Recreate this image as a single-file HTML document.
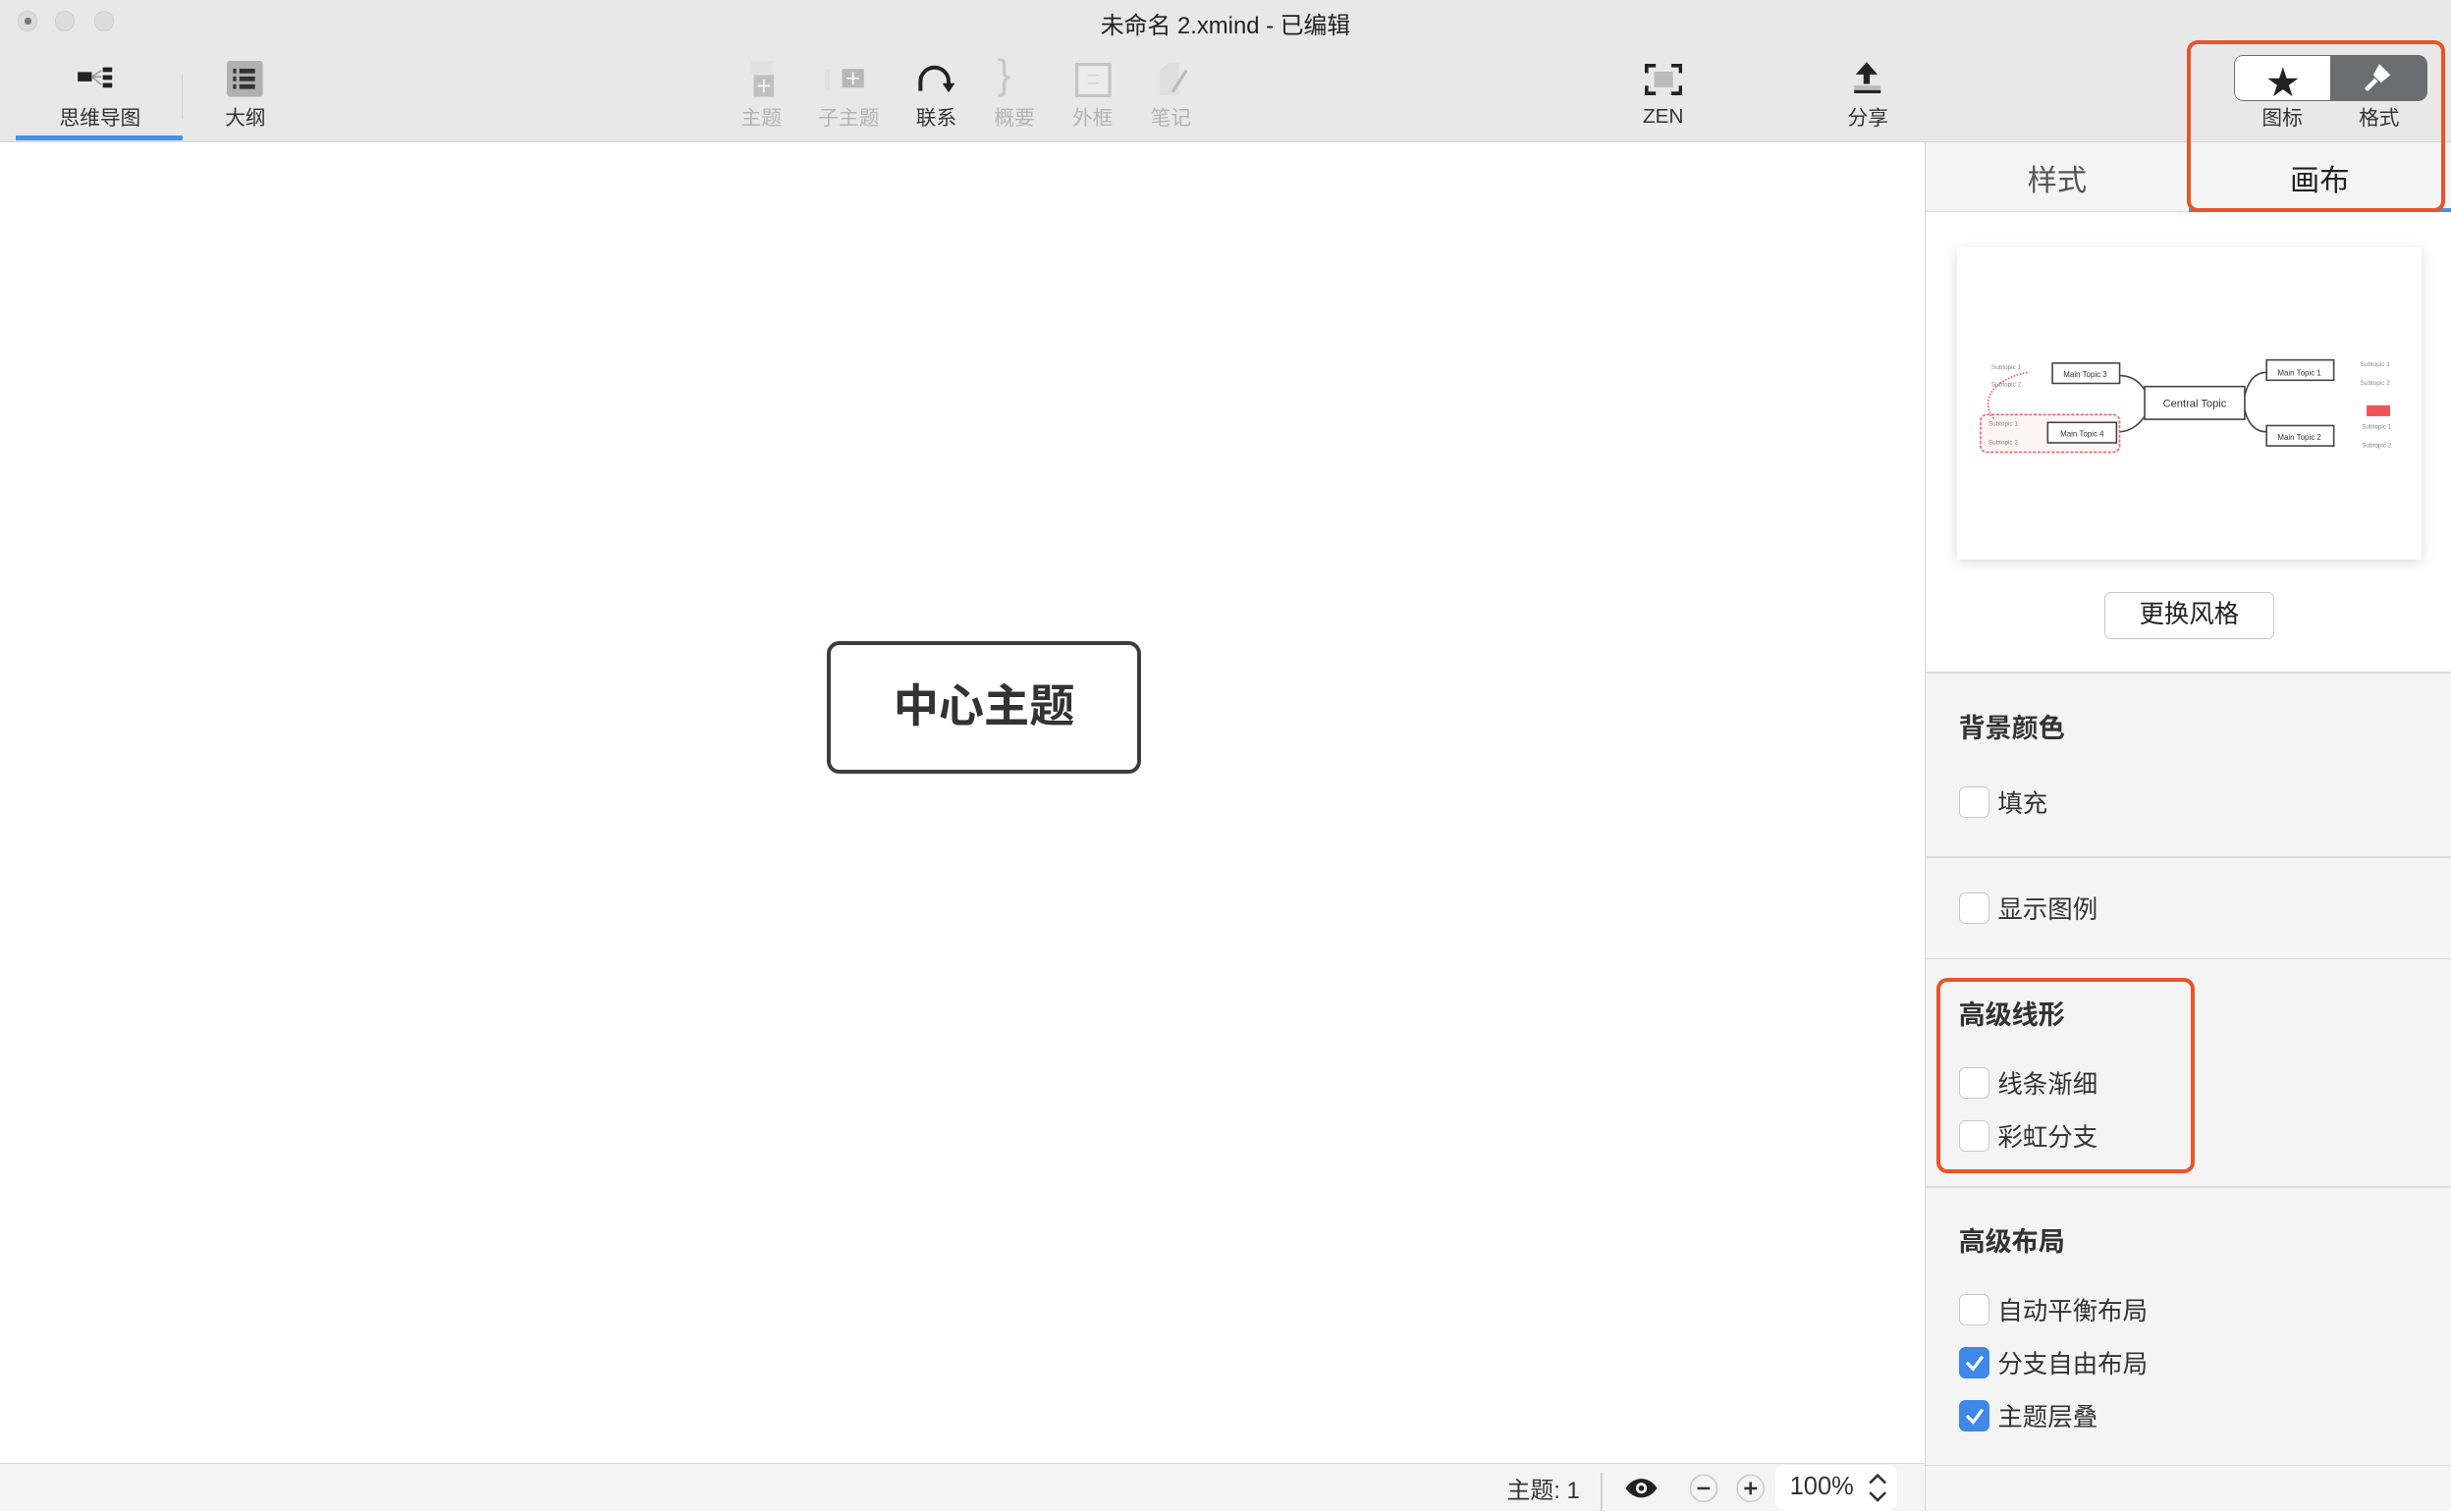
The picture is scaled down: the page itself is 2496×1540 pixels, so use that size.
<!DOCTYPE html>
<html><head><meta charset="utf-8"><style>
*{margin:0;padding:0;box-sizing:border-box}
html,body{width:2496px;height:1540px;overflow:hidden;background:#fff}
#r{zoom:1.59184;width:1568px;height:968px;position:relative;font-family:"Liberation Sans","Noto Sans CJK SC",sans-serif;color:#333}
.a{position:absolute}
.tb{left:0;top:0;width:1568px;height:91px;background:#e8e8e8;border-bottom:1px solid #d4d4d4}
.lbl{font-size:13px;color:#333;text-align:center;white-space:nowrap}
.dim{color:#b4b4b4}
.cb{width:20px;height:20px;border:1px solid #c8c8c8;border-radius:4px;background:#fff}
.cb.on{background:#3f88e5;border-color:#3f88e5}
.ct{font-size:16px;color:#333}
.h{font-size:17px;font-weight:bold;color:#333}
.sep{height:1px;background:#dcdcdc;left:1232px;width:336px}
</style></head><body><div id="r">
<div class="a tb"></div>
<div class="a" style="left:11px;top:7px;width:13px;height:13px;border-radius:50%;background:#dcdcdc;border:1px solid #cfcfcf"></div>
<div class="a" style="left:16px;top:11px;width:4px;height:5px;border-radius:50%;background:#777"></div>
<div class="a" style="left:35px;top:7px;width:13px;height:13px;border-radius:50%;background:#dcdcdc;border:1px solid #cfcfcf"></div>
<div class="a" style="left:60px;top:7px;width:13px;height:13px;border-radius:50%;background:#dcdcdc;border:1px solid #cfcfcf"></div>
<div class="a" style="left:0;width:1568px;top:4px;text-align:center;font-size:15px;color:#222">未命名 2.xmind - 已编辑</div>
<svg class="a" style="left:48px;top:42px" width="28" height="16"><rect x="2" y="4" width="9" height="6" fill="#222"/><rect x="18" y="1" width="6" height="3" fill="#222"/><rect x="18" y="6" width="6" height="3" fill="#222"/><rect x="18" y="11" width="6" height="3" fill="#222"/><path d="M11 7 L17 3 M11 7 L17 7 M11 7 L17 12" stroke="#999" fill="none"/></svg>
<div class="a lbl" style="left:30px;top:65px;width:68px">思维导图</div>
<div class="a" style="left:10px;top:87px;width:107px;height:3px;background:#4a90e2"></div>
<div class="a" style="left:116px;top:48px;width:1px;height:28px;background:#d0d0d0"></div>
<svg class="a" style="left:145px;top:39px" width="24" height="24"><rect x="0" y="0" width="23" height="23" rx="2" fill="#b0b0b0"/><rect x="4" y="5" width="2" height="3" fill="#333"/><rect x="8" y="5" width="10" height="3" fill="#333"/><rect x="4" y="10" width="2" height="3" fill="#333"/><rect x="8" y="10" width="10" height="3" fill="#333"/><rect x="4" y="15" width="2" height="3" fill="#333"/><rect x="8" y="15" width="10" height="3" fill="#333"/></svg>
<div class="a lbl" style="left:136px;top:65px;width:42px">大纲</div>
<svg class="a" style="left:476px;top:39px" width="24" height="24"><rect x="4" y="0" width="14" height="8" fill="#e0e0e0"/><rect x="6" y="9" width="13" height="14" fill="#c0c0c0"/><path d="M12.5 12v8M8.5 16h8" stroke="#fff"/></svg>
<div class="a lbl dim" style="left:466px;top:65px;width:42px">主题</div>
<svg class="a" style="left:528px;top:42px" width="30" height="18"><rect x="0" y="2" width="3" height="14" fill="#e0e0e0"/><rect x="11" y="2" width="14" height="12" fill="#b8b8b8"/><path d="M18 4v8M14 8h8" stroke="#fff"/></svg>
<div class="a lbl dim" style="left:518px;top:65px;width:50px">子主题</div>
<svg class="a" style="left:585px;top:40px" width="28" height="22"><path d="M4 18 V12 A9 9 0 0 1 22 12 V15" stroke="#222" stroke-width="2.5" fill="none"/><path d="M18 13 L22 19 L26 13Z" fill="#222"/></svg>
<div class="a lbl" style="left:578px;top:65px;width:42px">联系</div>
<div class="a" style="left:638px;top:33px;font-size:26px;color:#c8c8c8">}</div>
<div class="a lbl dim" style="left:628px;top:65px;width:42px">概要</div>
<svg class="a" style="left:688px;top:40px" width="24" height="22"><rect x="1" y="1" width="21" height="20" fill="#ececec" stroke="#c4c4c4" stroke-width="2"/><path d="M8 8h7M8 13h7" stroke="#d0d0d0"/></svg>
<div class="a lbl dim" style="left:678px;top:65px;width:42px">外框</div>
<svg class="a" style="left:740px;top:39px" width="22" height="24"><path d="M2 6 L8 1 H14 V22 H2Z" fill="#dedede"/><path d="M10 20 L19 6" stroke="#bbb" stroke-width="2"/></svg>
<div class="a lbl dim" style="left:728px;top:65px;width:42px">笔记</div>
<svg class="a" style="left:1052px;top:41px" width="24" height="20"><path d="M1 6V1h6M17 1h6v5M23 14v5h-6M7 19H1v-5" stroke="#222" stroke-width="2.5" fill="none"/><rect x="6" y="5" width="12" height="10" fill="#bbb"/></svg>
<div class="a lbl" style="left:1040px;top:67px;width:48px">ZEN</div>
<svg class="a" style="left:1184px;top:38px" width="22" height="24"><path d="M10 2 L3 10 H8 V16 H12 V10 H17Z" fill="#222"/><rect x="2" y="17" width="17" height="5" fill="#bbb"/><rect x="2" y="20" width="17" height="2" fill="#222"/></svg>
<div class="a lbl" style="left:1174px;top:65px;width:42px">分享</div>
<div class="a" style="left:1429px;top:35px;width:124px;height:30px;border-radius:6px;background:#6b6d70"></div>
<div class="a" style="left:1430px;top:36px;width:61px;height:28px;border-radius:5px 0 0 5px;background:#fff"></div>
<div class="a" style="left:1450px;top:36px;font-size:21px;color:#222">★</div>
<svg class="a" style="left:1510px;top:39px" width="22" height="22"><path d="M12 2 L19 9 L13 14 L8 9Z" fill="#fff"/><path d="M9 11 L3 17 A1.5 1.5 0 0 0 5 19 L11 13" fill="#fff"/></svg>
<div class="a lbl" style="left:1438px;top:65px;width:44px">图标</div>
<div class="a lbl" style="left:1500px;top:65px;width:44px">格式</div>
<div class="a" style="left:1231px;top:91px;width:1px;height:876px;background:#d8d8d8"></div>
<div class="a" style="left:1232px;top:91px;width:336px;height:45px;background:#f4f4f4;border-bottom:1px solid #d8d8d8"></div>
<div class="a" style="left:1232px;top:100px;width:168px;text-align:center;font-size:19px;color:#555">样式</div>
<div class="a" style="left:1400px;top:100px;width:168px;text-align:center;font-size:19px;color:#222">画布</div>
<div class="a" style="left:1400px;top:133px;width:168px;height:3px;background:#4a90e2"></div>
<div class="a" style="left:1232px;top:137px;width:336px;height:293px;background:#fff"></div>
<div class="a" style="left:1232px;top:430px;width:336px;height:537px;background:#f4f4f4"></div>
<div class="a" style="left:1252px;top:158px;width:297px;height:200px;background:#fff;box-shadow:0 2px 8px rgba(0,0,0,.15)"></div>
<svg class="a" style="left:1252px;top:158px" width="297" height="200" font-family="Liberation Sans" font-size="5">
<g fill="none" stroke="#444" stroke-width="1"><path d="M104 82 C112 82 118 86 122 95"/><path d="M103 118 C112 118 118 112 122 105"/><path d="M184 95 C186 86 190 80 198 80"/><path d="M184 104 C186 112 190 118 198 118"/></g>
<rect x="120" y="89" width="64" height="21" fill="#fff" stroke="#444"/><text x="152" y="102" text-anchor="middle" font-size="7" fill="#333">Central Topic</text>
<rect x="61" y="74" width="43" height="13" fill="#fff" stroke="#444"/><text x="82" y="83" text-anchor="middle" fill="#333">Main Topic 3</text>
<rect x="15" y="107" width="89" height="24" rx="4" fill="#fdf4f4" stroke="#e66" stroke-dasharray="2 1"/>
<rect x="58" y="112" width="44" height="13" fill="#fff" stroke="#444"/><text x="80" y="121" text-anchor="middle" fill="#333">Main Topic 4</text>
<rect x="198" y="72" width="43" height="13" fill="#fff" stroke="#444"/><text x="219" y="82" text-anchor="middle" fill="#333">Main Topic 1</text>
<rect x="198" y="114" width="43" height="13" fill="#fff" stroke="#444"/><text x="219" y="123" text-anchor="middle" fill="#333">Main Topic 2</text>
<rect x="262" y="101" width="15" height="7" fill="#e55"/>
<g fill="#888" font-size="4"><text x="22" y="78">Subtopic 1</text><text x="22" y="89">Subtopic 2</text><text x="20" y="114">Subtopic 1</text><text x="20" y="126">Subtopic 2</text><text x="258" y="76">Subtopic 1</text><text x="258" y="88">Subtopic 2</text><text x="259" y="116">Subtopic 1</text><text x="259" y="128">Subtopic 2</text></g>
<path d="M45 80 C20 85 15 100 24 110" stroke="#e55" fill="none" stroke-dasharray="1 1"/>
</svg>
<div class="a" style="left:1346px;top:379px;width:109px;height:30px;background:#fff;border:1px solid #c8c8c8;border-radius:4px;text-align:center;font-size:16px;line-height:28px;color:#222">更换风格</div>
<div class="a sep" style="top:430px"></div>
<div class="a h" style="left:1253px;top:452px">背景颜色</div>
<div class="a cb" style="left:1253px;top:503px"></div><div class="a ct" style="left:1278px;top:501px">填充</div>
<div class="a sep" style="top:548px"></div>
<div class="a cb" style="left:1253px;top:571px"></div><div class="a ct" style="left:1278px;top:569px">显示图例</div>
<div class="a sep" style="top:613px"></div>
<div class="a h" style="left:1253px;top:636px">高级线形</div>
<div class="a cb" style="left:1253px;top:683px"></div><div class="a ct" style="left:1278px;top:681px">线条渐细</div>
<div class="a cb" style="left:1253px;top:717px"></div><div class="a ct" style="left:1278px;top:715px">彩虹分支</div>
<div class="a sep" style="top:759px"></div>
<div class="a h" style="left:1253px;top:781px">高级布局</div>
<div class="a cb" style="left:1253px;top:828px"></div><div class="a ct" style="left:1278px;top:826px">自动平衡布局</div>
<div class="a cb on" style="left:1253px;top:862px"></div><div class="a ct" style="left:1278px;top:860px">分支自由布局</div>
<div class="a cb on" style="left:1253px;top:896px"></div><div class="a ct" style="left:1278px;top:894px">主题层叠</div>
<svg class="a" style="left:1253px;top:862px" width="20" height="54"><path d="M5 10 L9 14 L15 6M5 44 L9 48 L15 40" stroke="#fff" stroke-width="2" fill="none"/></svg>
<div class="a sep" style="top:937px"></div>
<div class="a" style="left:1399px;top:26px;width:165px;height:110px;border:3px solid #e9542a;border-radius:7px"></div>
<div class="a" style="left:1239px;top:626px;width:165px;height:125px;border:3px solid #e9542a;border-radius:7px"></div>
<div class="a" style="left:529px;top:410px;width:201px;height:85px;border:3px solid #3a3d44;border-radius:8px;background:#fff;text-align:center;line-height:79px;font-size:29px;font-weight:bold;color:#333">中心主题</div>
<div class="a" style="left:0;top:936px;width:1231px;height:31px;background:#f4f4f4;border-top:1px solid #d8d8d8"></div>
<div class="a" style="left:964px;top:941px;font-size:15px;color:#333">主题: 1</div>
<div class="a" style="left:1024px;top:942px;width:1px;height:25px;background:#d0d0d0"></div>
<svg class="a" style="left:1039px;top:944px" width="22" height="16"><path d="M1 8 C6 0 16 0 21 8 C16 16 6 16 1 8Z" fill="#222"/><circle cx="11" cy="8" r="3.5" fill="#fff"/><circle cx="11" cy="8" r="1.8" fill="#222"/></svg>
<svg class="a" style="left:1080px;top:942px" width="52" height="20"><circle cx="10" cy="10" r="8.5" fill="none" stroke="#ccc"/><path d="M6 10h8" stroke="#333" stroke-width="1.6"/><circle cx="40" cy="10" r="8.5" fill="none" stroke="#ccc"/><path d="M36 10h8M40 6v8" stroke="#333" stroke-width="1.6"/></svg>
<div class="a" style="left:1136px;top:937px;width:78px;height:30px;background:#fff;border-radius:6px"></div>
<div class="a" style="left:1145px;top:942px;font-size:16px;color:#333">100%</div>
<svg class="a" style="left:1194px;top:943px" width="14" height="18"><path d="M2 6 L7 1 L12 6M2 12 L7 17 L12 12" stroke="#333" stroke-width="1.6" fill="none"/></svg>
</div></body></html>
